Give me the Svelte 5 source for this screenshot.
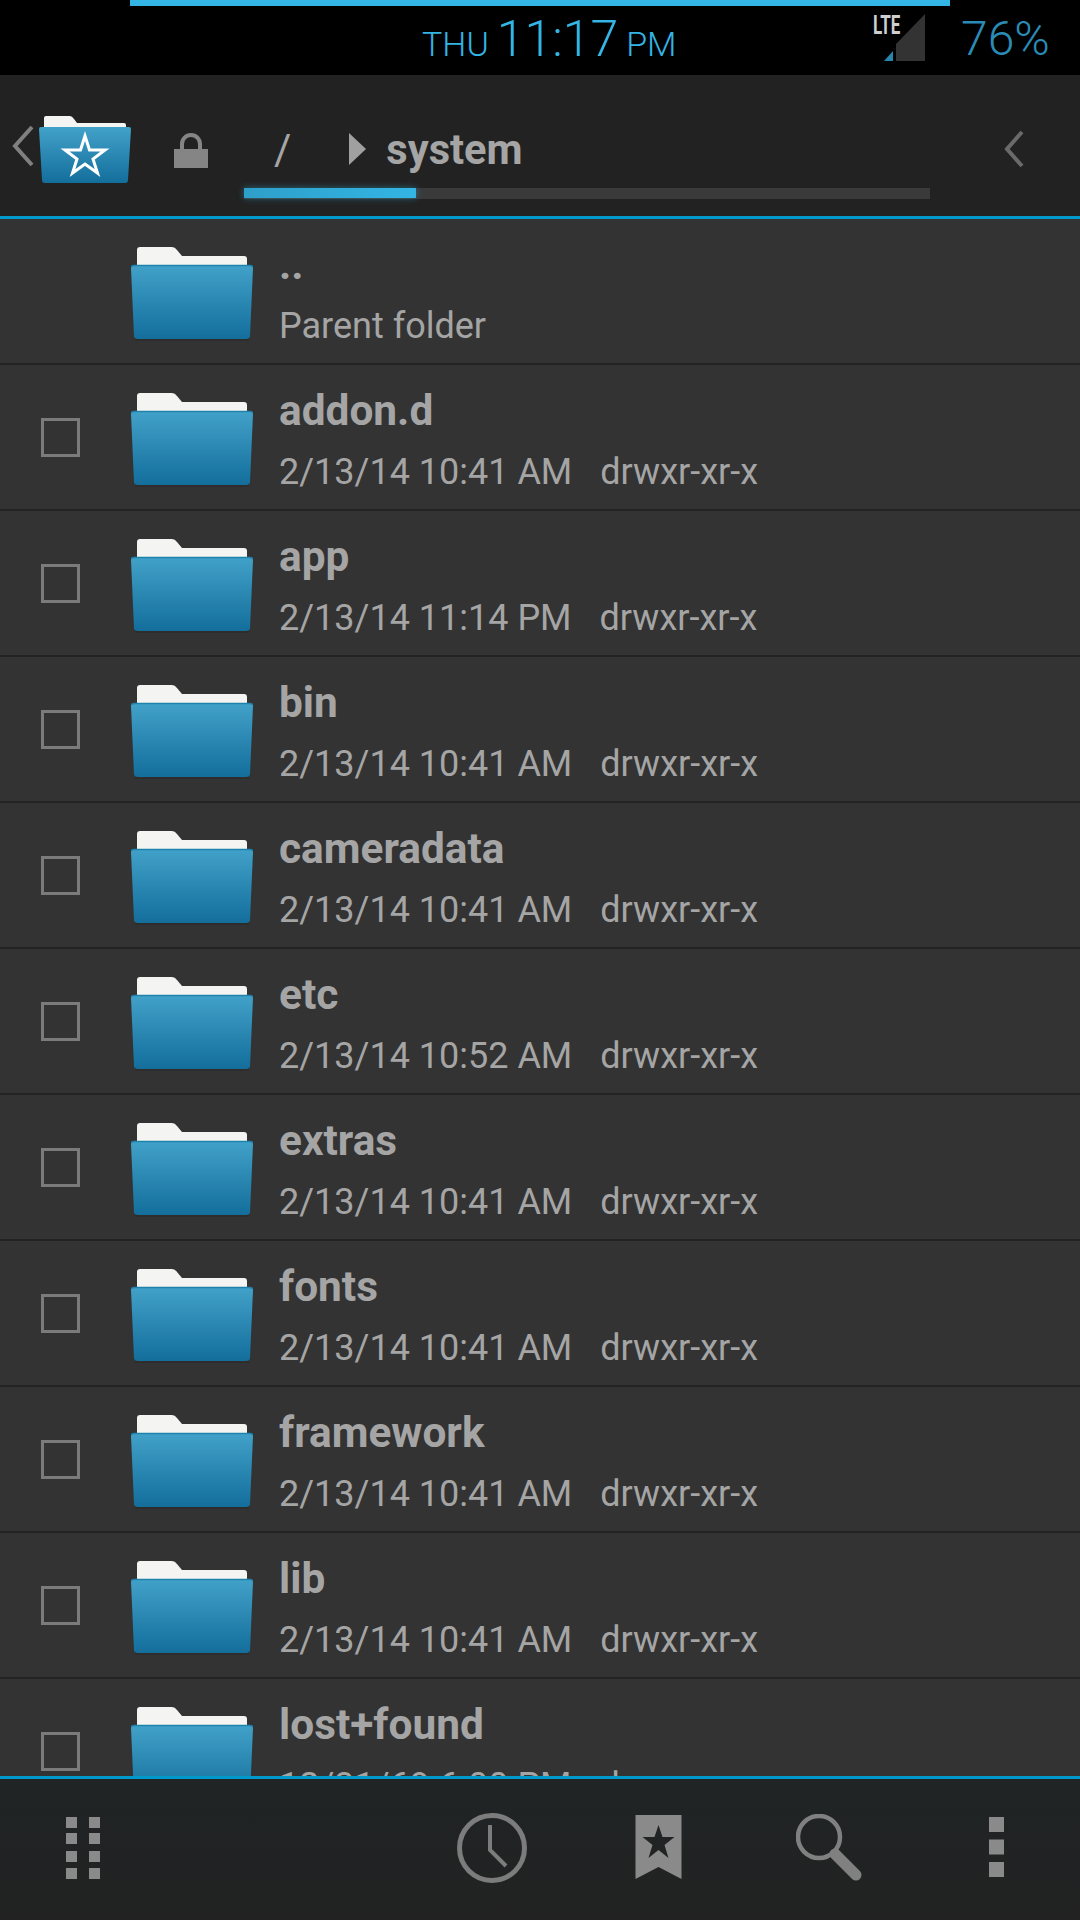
<script>
  const rows = [
    { name: 'addon.d', date: '2/13/14 10:41 AM', perm: 'drwxr-xr-x' },
    { name: 'app', date: '2/13/14 11:14 PM', perm: 'drwxr-xr-x' },
    { name: 'bin', date: '2/13/14 10:41 AM', perm: 'drwxr-xr-x' },
    { name: 'cameradata', date: '2/13/14 10:41 AM', perm: 'drwxr-xr-x' },
    { name: 'etc', date: '2/13/14 10:52 AM', perm: 'drwxr-xr-x' },
    { name: 'extras', date: '2/13/14 10:41 AM', perm: 'drwxr-xr-x' },
    { name: 'fonts', date: '2/13/14 10:41 AM', perm: 'drwxr-xr-x' },
    { name: 'framework', date: '2/13/14 10:41 AM', perm: 'drwxr-xr-x' },
    { name: 'lib', date: '2/13/14 10:41 AM', perm: 'drwxr-xr-x' },
    { name: 'lost+found', date: '12/31/69 6:00 PM', perm: 'drwx------' }
  ];
</script>

{#snippet folder()}
  <svg class="folder" width="124" height="98" viewBox="0 0 124 98">
    <path d="M5 92 H119 V95 H5 Z" fill="#000" opacity="0.1" />
    <path d="M7 20 V4 Q7 1 10 1 H42 Q45 1 47 4 L52 10 H114 Q117 10 117 13 V22 H7 Z" fill="#f4f4f2" />
    <path d="M1 22 Q1 19 4 19 H120 Q123 19 123 22 L120 90 Q120 93 116 93 H8 Q4 93 4 90 Z" fill="url(#folderFill)" />
    <path d="M1.5 21 Q2 19.5 4 19.5 H120 Q122 19.5 122.5 21" fill="none" stroke="#1f82ad" stroke-width="1.5" />
  </svg>
{/snippet}

<svg class="defs" width="0" height="0">
  <defs>
    <linearGradient id="folderFill" x1="0" y1="0" x2="0" y2="1">
      <stop offset="0" stop-color="#42a1c9" />
      <stop offset="1" stop-color="#136e9b" />
    </linearGradient>
  </defs>
</svg>

<div class="screen">
  <header class="status">
    <div class="load"></div>
    <div class="clock">
      <span class="small">THU</span>
      <span class="time">11:17</span>
      <span class="small">PM</span>
    </div>
    <div class="signal">
      <svg width="44" height="48" viewBox="0 0 44 48">
        <path d="M42 0 V47 H13 V30 Z" fill="#333" />
        <path d="M1 47 L10 37 V47 Z" fill="#2a85ad" />
      </svg>
      <span class="lte">LTE</span>
    </div>
    <span class="battery">76%</span>
  </header>

  <nav class="toolbar">
    <svg class="back" width="22" height="42" viewBox="0 0 22 42">
      <path d="M20 2 L3 21 L20 40" fill="none" stroke="#808080" stroke-width="4" />
    </svg>
    <svg class="logo" width="94" height="70" viewBox="0 0 94 70">
      <path d="M6 14 V3 Q6 1 8 1 H32 Q34 1 36 4 L39 8 H86 Q88 8 88 10 V16 H6 Z" fill="#f4f4f2" />
      <path d="M1 14 Q1 12 3 12 H91 Q93 12 93 14 L90 65 Q90 68 87 68 H7 Q4 68 4 65 Z" fill="url(#folderFill)" />
      <path d="M47 21 L51.5 35 H67 L55 44 L59.5 58 L47 49 L34.5 58 L39 44 L27 35 H42.5 Z" fill="none" stroke="#fff" stroke-width="3" />
    </svg>
    <svg class="lock" width="36" height="37" viewBox="0 0 36 37">
      <path d="M9 17 V12 A9 9 0 0 1 27 12 V17" fill="none" stroke="#858585" stroke-width="4" />
      <rect x="1" y="17" width="34" height="19" fill="#858585" />
    </svg>
    <div class="path">
      <div class="crumbs">
        <span class="root">/</span>
        <svg class="arrow" width="17" height="33" viewBox="0 0 17 33"><path d="M0 0 L17 16 L0 32 Z" fill="#a0a0a0" /></svg>
        <span class="crumb">system</span>
      </div>
      <div class="track"><div class="thumb"></div></div>
    </div>
    <svg class="fwd" width="20" height="38" viewBox="0 0 20 38">
      <path d="M18 2 L3 19 L18 36" fill="none" stroke="#6a6a6a" stroke-width="4" />
    </svg>
  </nav>

  <main class="list">
    <div class="row">
      <div class="check-col"></div>
      {@render folder()}
      <div class="info">
        <div class="name">..</div>
        <div class="meta">Parent folder</div>
      </div>
    </div>
    {#each rows as row}
      <div class="row">
        <div class="check-col"><div class="check"></div></div>
        {@render folder()}
        <div class="info">
          <div class="name">{row.name}</div>
          <div class="meta"><span>{row.date}</span><span class="perm">{row.perm}</span></div>
        </div>
      </div>
    {/each}
  </main>

  <footer class="bottom">
    <svg class="dots" width="34" height="62" viewBox="0 0 34 62">
      {#each [0, 16, 34, 51] as y}
        <rect x="0" {y} width="11" height="11" fill="#8a8a8a" />
        <rect x="23" {y} width="11" height="11" fill="#8a8a8a" />
      {/each}
    </svg>
    <svg class="history" width="70" height="72" viewBox="0 0 70 72">
      <circle cx="35" cy="36" r="32.5" fill="none" stroke="#7c7c7c" stroke-width="5" />
      <path d="M33 13 V38 L49 54" fill="none" stroke="#7c7c7c" stroke-width="4" />
    </svg>
    <svg class="bookmark" width="49" height="66" viewBox="0 0 48 66">
      <path fill-rule="evenodd" d="M1 1 H47 V65 L24 53 L1 65 Z M24 11 L28 23 H40 L30 31 L34 44 L24 36 L14 44 L18 31 L8 23 H20 Z" fill="#8a8a8a" />
    </svg>
    <svg class="search" width="66" height="68" viewBox="0 0 66 68">
      <circle cx="23" cy="23" r="21" fill="none" stroke="#808080" stroke-width="4.5" />
      <path d="M39 40 L60 61" fill="none" stroke="#808080" stroke-width="11" stroke-linecap="round" />
    </svg>
    <svg class="more" width="15" height="61" viewBox="0 0 15 61">
      <rect y="0" width="15" height="15" fill="#8a8a8a" />
      <rect y="22.5" width="15" height="15" fill="#8a8a8a" />
      <rect y="45" width="15" height="15" fill="#8a8a8a" />
    </svg>
  </footer>
</div>

<style>
  :global(body) {
    margin: 0;
    background: #000;
  }

  .defs {
    position: absolute;
  }

  .screen {
    width: 1080px;
    height: 1920px;
    display: flex;
    flex-direction: column;
    overflow: hidden;
    font-family: Roboto, "Liberation Sans", sans-serif;
  }

  svg {
    display: block;
    flex-shrink: 0;
  }

  .status {
    position: relative;
    height: 75px;
    flex-shrink: 0;
    background: #000;
    display: flex;
    align-items: flex-start;
    color: #33b5e5;
  }

  .load {
    position: absolute;
    top: 0;
    left: 130px;
    width: 820px;
    height: 6px;
    background: #33b5e5;
  }

  .clock {
    margin-left: 422px;
    width: 253px;
    height: 75px;
    display: flex;
    align-items: baseline;
    white-space: nowrap;
    font-weight: 300;
    line-height: 79px;
  }

  .small {
    font-size: 34px;
  }

  .time {
    font-size: 50px;
    margin: 0 8px 0 8px;
  }

  .signal {
    position: relative;
    margin: 14px 0 0 208px;
  }

  .lte {
    position: absolute;
    left: -10px;
    top: 0;
    color: #cfcfcf;
    font-size: 25px;
    font-weight: 700;
    line-height: 24px;
    transform: scaleX(0.68);
    transform-origin: left top;
  }

  .battery {
    margin-left: 34px;
    font-size: 48px;
    font-weight: 300;
    line-height: 78px;
    color: #2a8bb5;
  }

  .toolbar {
    height: 141px;
    flex-shrink: 0;
    background: #222;
    border-bottom: 3px solid #0099cc;
    display: flex;
    align-items: flex-start;
  }

  .back {
    margin: 50px 0 0 12px;
  }

  .logo {
    margin: 40px 0 0 4px;
  }

  .lock {
    margin: 57px 0 0 41px;
  }

  .path {
    width: 686px;
    margin-left: 35px;
  }

  .crumbs {
    box-sizing: border-box;
    height: 114px;
    padding-top: 34px;
    display: flex;
    align-items: center;
    color: #a5a5a5;
  }

  .root {
    font-size: 42px;
    margin-left: 30px;
  }

  .arrow {
    margin-left: 58px;
  }

  .crumb {
    margin-left: 20px;
    font-size: 41.6px;
    font-weight: 700;
  }

  .track {
    height: 11px;
    margin-top: -1px;
    background: #3a3a3a;
  }

  .thumb {
    width: 172px;
    height: 10px;
    background: linear-gradient(90deg, #2e9fc9, #33b5e5);
    box-shadow: 0 0 7px rgba(51, 181, 229, 0.45);
  }

  .fwd {
    margin: 55px 0 0 74px;
  }

  .list {
    flex: 1;
    min-height: 0;
    overflow: hidden;
    background: #333;
  }

  .row {
    height: 144px;
    border-bottom: 2px solid #232323;
    display: flex;
    align-items: flex-start;
  }

  .check-col {
    width: 130px;
    flex-shrink: 0;
  }

  .check {
    width: 33px;
    height: 33px;
    margin: 53px 0 0 41px;
    border: 3px solid #7b7b7b;
  }

  .folder {
    margin-top: 27px;
  }

  .info {
    margin-left: 25px;
    color: #a5a5a5;
    white-space: nowrap;
  }

  .name {
    font-size: 42.4px;
    font-weight: 700;
    line-height: 46px;
    margin-top: 23px;
  }

  .meta {
    font-size: 36px;
    line-height: 40px;
    margin-top: 18px;
    display: flex;
  }

  .perm {
    margin-left: 28px;
  }

  .bottom {
    height: 141px;
    flex-shrink: 0;
    background: linear-gradient(#202425, #222);
    border-top: 3px solid #0099cc;
    display: flex;
    align-items: flex-start;
  }

  .dots {
    margin: 38px 0 0 66px;
  }

  .history {
    margin: 33px 0 0 357px;
  }

  .bookmark {
    margin: 35px 0 0 107px;
  }

  .search {
    margin: 35px 0 0 113px;
  }

  .more {
    margin: 38px 0 0 127px;
  }
</style>
